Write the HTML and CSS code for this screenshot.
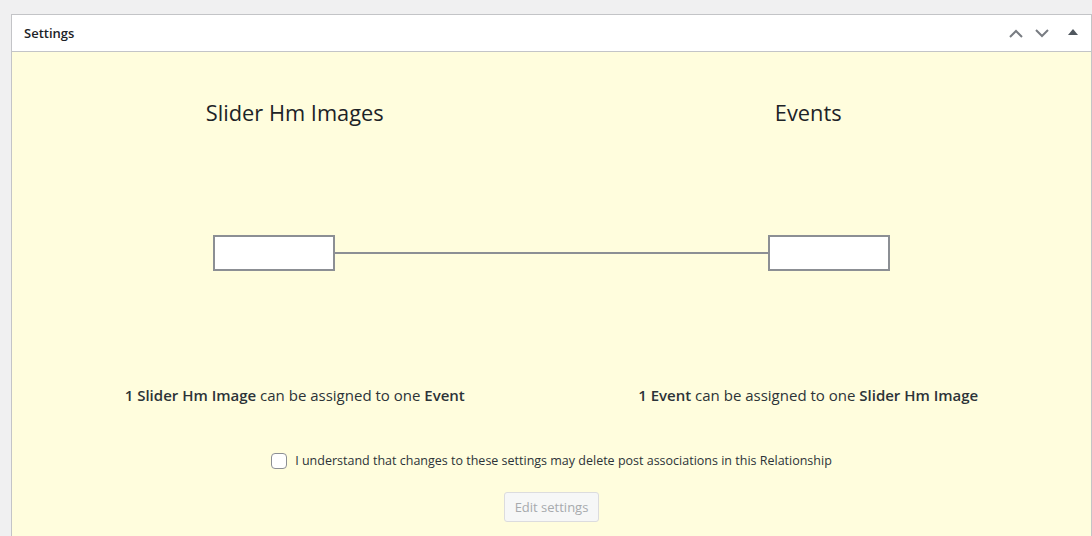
FILE: index.html
```html
<!DOCTYPE html>
<html>
<head>
    <title>Relationship settings</title>
    <link rel="stylesheet" href="styles.css">
</head>
<body>
    <div class="postbox">
        <div class="postbox-header">
            <h2 class="postbox-title">Settings</h2>
            <div class="handle-actions">
                <button class="handle-btn" type="button" aria-label="Move up">
                    <svg width="14" height="9" viewBox="0 0 14 9"><path d="M1 8 L7 2 L13 8" fill="none" stroke="#787c82" stroke-width="2"/></svg>
                </button>
                <button class="handle-btn" type="button" aria-label="Move down">
                    <svg width="14" height="9" viewBox="0 0 14 9"><path d="M1 1 L7 7 L13 1" fill="none" stroke="#787c82" stroke-width="2"/></svg>
                </button>
                <button class="handle-btn toggle" type="button" aria-label="Toggle panel">
                    <svg width="10" height="6" viewBox="0 0 10 6"><path d="M0 6 L5 0 L10 6 Z" fill="#50575e"/></svg>
                </button>
            </div>
        </div>
        <div class="inside">
            <!-- post type names on both ends of the relationship -->
            <div class="rel-columns rel-titles">
                <div class="rel-col">Slider Hm Images</div>
                <div class="rel-col">Events</div>
            </div>

            <!-- one-to-one diagram -->
            <div class="rel-diagram">
                <div class="rel-box"></div>
                <div class="rel-line"></div>
                <div class="rel-box"></div>
            </div>

            <div class="rel-columns rel-desc">
                <div class="rel-col"><b>1 Slider Hm Image</b> can be assigned to one <b>Event</b></div>
                <div class="rel-col"><b>1 Event</b> can be assigned to one <b>Slider Hm Image</b></div>
            </div>

            <label class="confirm-row">
                <input type="checkbox" class="confirm-check">
                <span>I understand that changes to these settings may delete post associations in this Relationship</span>
            </label>

            <div class="actions">
                <button class="button" type="button" disabled>Edit settings</button>
            </div>
        </div>
    </div>
</body>
</html>
```

FILE: styles.css
```css
html, body {
    margin: 0;
    padding: 0;
}
body {
    background: #f0f0f1;
    font-family: "Open Sans", "Noto Sans", sans-serif;
    color: #1d2327;
    overflow: hidden;
}

.postbox {
    margin: 14px 0 0 11px;
    width: 1081px;
    box-sizing: border-box;
    border: 1px solid #c3c4c7;
    background: #fff;
}
.postbox-header {
    display: flex;
    align-items: center;
    justify-content: space-between;
    height: 36px;
    border-bottom: 1px solid #c3c4c7;
}
.postbox-title {
    margin: 0;
    padding-left: 12px;
    font-size: 13px;
    font-weight: 600;
    line-height: 36px;
}
.handle-actions {
    display: flex;
    height: 36px;
}
.handle-btn {
    width: 26px;
    height: 36px;
    padding: 0;
    border: 0;
    background: none;
    display: flex;
    align-items: center;
    justify-content: center;
}
.handle-btn.toggle {
    width: 36px;
    padding-bottom: 3px;
}

.inside {
    background: #fffddd;
    padding-bottom: 40px;
}

.rel-columns {
    display: grid;
    grid-template-columns: 1fr 1fr;
    padding: 0 26px;
    text-align: center;
}
.rel-titles {
    padding-top: 47px;
    font-size: 21.8px;
    line-height: 28px;
    color: #1d2327;
}
.rel-diagram {
    display: flex;
    align-items: center;
    width: 677px;
    margin: 108px 0 0 201px;
}
.rel-box {
    width: 122px;
    height: 36px;
    box-sizing: border-box;
    border: 2px solid #8c8f94;
    background: #fff;
}
.rel-line {
    flex: 1;
    height: 2px;
    background: #8c8f94;
}
.rel-desc {
    margin-top: 113px;
    font-size: 15px;
    line-height: 22px;
    color: #2c3338;
}
.rel-desc b {
    font-weight: 600;
}

.confirm-row {
    display: flex;
    align-items: center;
    justify-content: center;
    gap: 8px;
    margin-top: 46px;
    font-size: 12.5px;
    color: #2c3338;
}
.confirm-check {
    appearance: none;
    margin: 0;
    width: 16px;
    height: 16px;
    border: 1px solid #8c8f94;
    border-radius: 4px;
    background: #fff;
}

.actions {
    display: flex;
    justify-content: center;
    margin-top: 23px;
}
.button {
    height: 30px;
    padding: 0 10px;
    font-family: inherit;
    font-size: 13px;
    color: #a7aaad;
    background: #f6f7f7;
    border: 1px solid #dcdcde;
    border-radius: 3px;
}
```
